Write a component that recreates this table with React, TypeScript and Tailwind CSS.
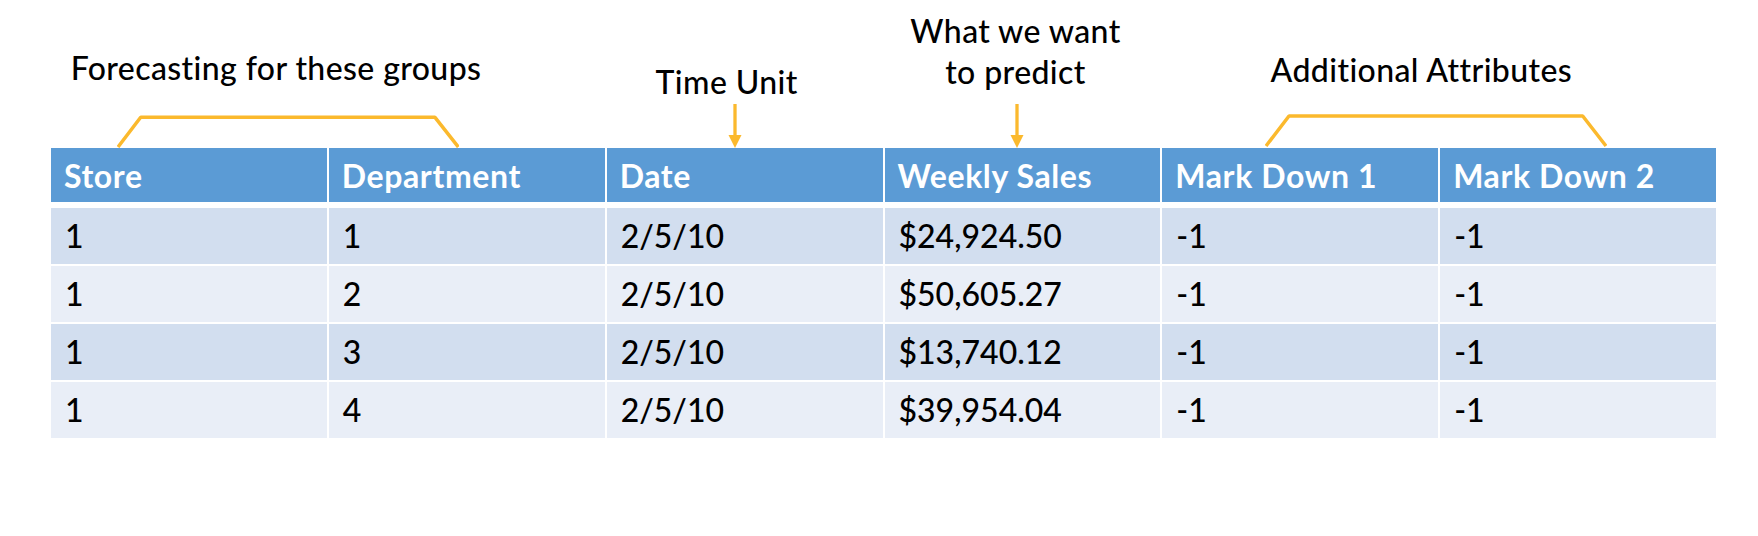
const ORANGE = '#FBB92D';

const headers = ['Store', 'Department', 'Date', 'Weekly Sales', 'Mark Down 1', 'Mark Down 2'];

const rows = [
  ['1', '1', '2/5/10', '$24,924.50', '-1', '-1'],
  ['1', '2', '2/5/10', '$50,605.27', '-1', '-1'],
  ['1', '3', '2/5/10', '$13,740.12', '-1', '-1'],
  ['1', '4', '2/5/10', '$39,954.04', '-1', '-1'],
];

function Bracket({ className, points }: { className?: string; points: string }) {
  return (
    <svg className={className} width="342" height="34" viewBox="0 0 342 34" fill="none">
      <polyline points={points} stroke={ORANGE} strokeWidth="3.5" strokeLinejoin="bevel" />
    </svg>
  );
}

function DownArrow({ className }: { className?: string }) {
  return (
    <svg className={className} width="14" height="44" viewBox="0 0 14 44" fill="none">
      <line x1="7" y1="0" x2="7" y2="33" stroke={ORANGE} strokeWidth="3.3" />
      <polygon points="0.5,31 13.5,31 7,44" fill={ORANGE} />
    </svg>
  );
}

export default function App() {
  return (
    <div className="w-[1758px] h-[536px] bg-white pl-[51px] font-['Lato',sans-serif] text-black">
      <div className="w-[1665px]">
        {/* Annotations above the table */}
        <div className="grid grid-cols-6 gap-x-[2px] h-[148px] text-[32px] font-medium tracking-[0.4px]">
          <div className="col-span-2 flex flex-col justify-end">
            <p className="ml-[5px] w-[440px] text-center leading-[40px]">Forecasting for these groups</p>
            <Bracket className="mt-[26px] ml-[66px]" points="1,33 23.7,3.3 318,3.3 341.3,33" />
          </div>

          <div className="flex flex-col justify-end">
            <p className="w-[240px] text-center leading-[40px]">Time Unit</p>
            <DownArrow className="mt-[2px] ml-[121px]" />
          </div>

          <div className="flex flex-col justify-end">
            <p className="ml-[1px] w-[260px] text-center leading-[41px]">
              What we want
              <br />
              to predict
            </p>
            <DownArrow className="mt-[12px] ml-[125px]" />
          </div>

          <div className="col-span-2 col-start-5 flex flex-col justify-end">
            <p className="ml-[59px] w-[400px] text-center leading-[40px]">Additional Attributes</p>
            <Bracket className="mt-[24px] ml-[103px]" points="1,32 24,2 317.7,2 341,32" />
          </div>
        </div>

        {/* Table */}
        <div className="flex flex-col">
          <div className="grid grid-cols-6 gap-x-[2px] h-[54px]">
            {headers.map((h) => (
              <div
                key={h}
                className="bg-[#5B9BD5] flex items-center pl-[13px] pt-[2px] text-white font-bold text-[32px] leading-[40px] tracking-[0.6px]"
              >
                {h}
              </div>
            ))}
          </div>
          <div className="mt-[6px] flex flex-col gap-y-[2px]">
            {rows.map((r, i) => (
              <div key={i} className="grid grid-cols-6 gap-x-[2px] h-[56px]">
                {r.map((c, j) => (
                  <div
                    key={j}
                    className={`flex items-center pl-[14px] text-[32px] font-medium leading-[40px] ${i % 2 === 0 ? 'bg-[#D2DEEF]' : 'bg-[#E9EEF7]'}`}
                  >
                    {c}
                  </div>
                ))}
              </div>
            ))}
          </div>
        </div>
      </div>
    </div>
  );
}
